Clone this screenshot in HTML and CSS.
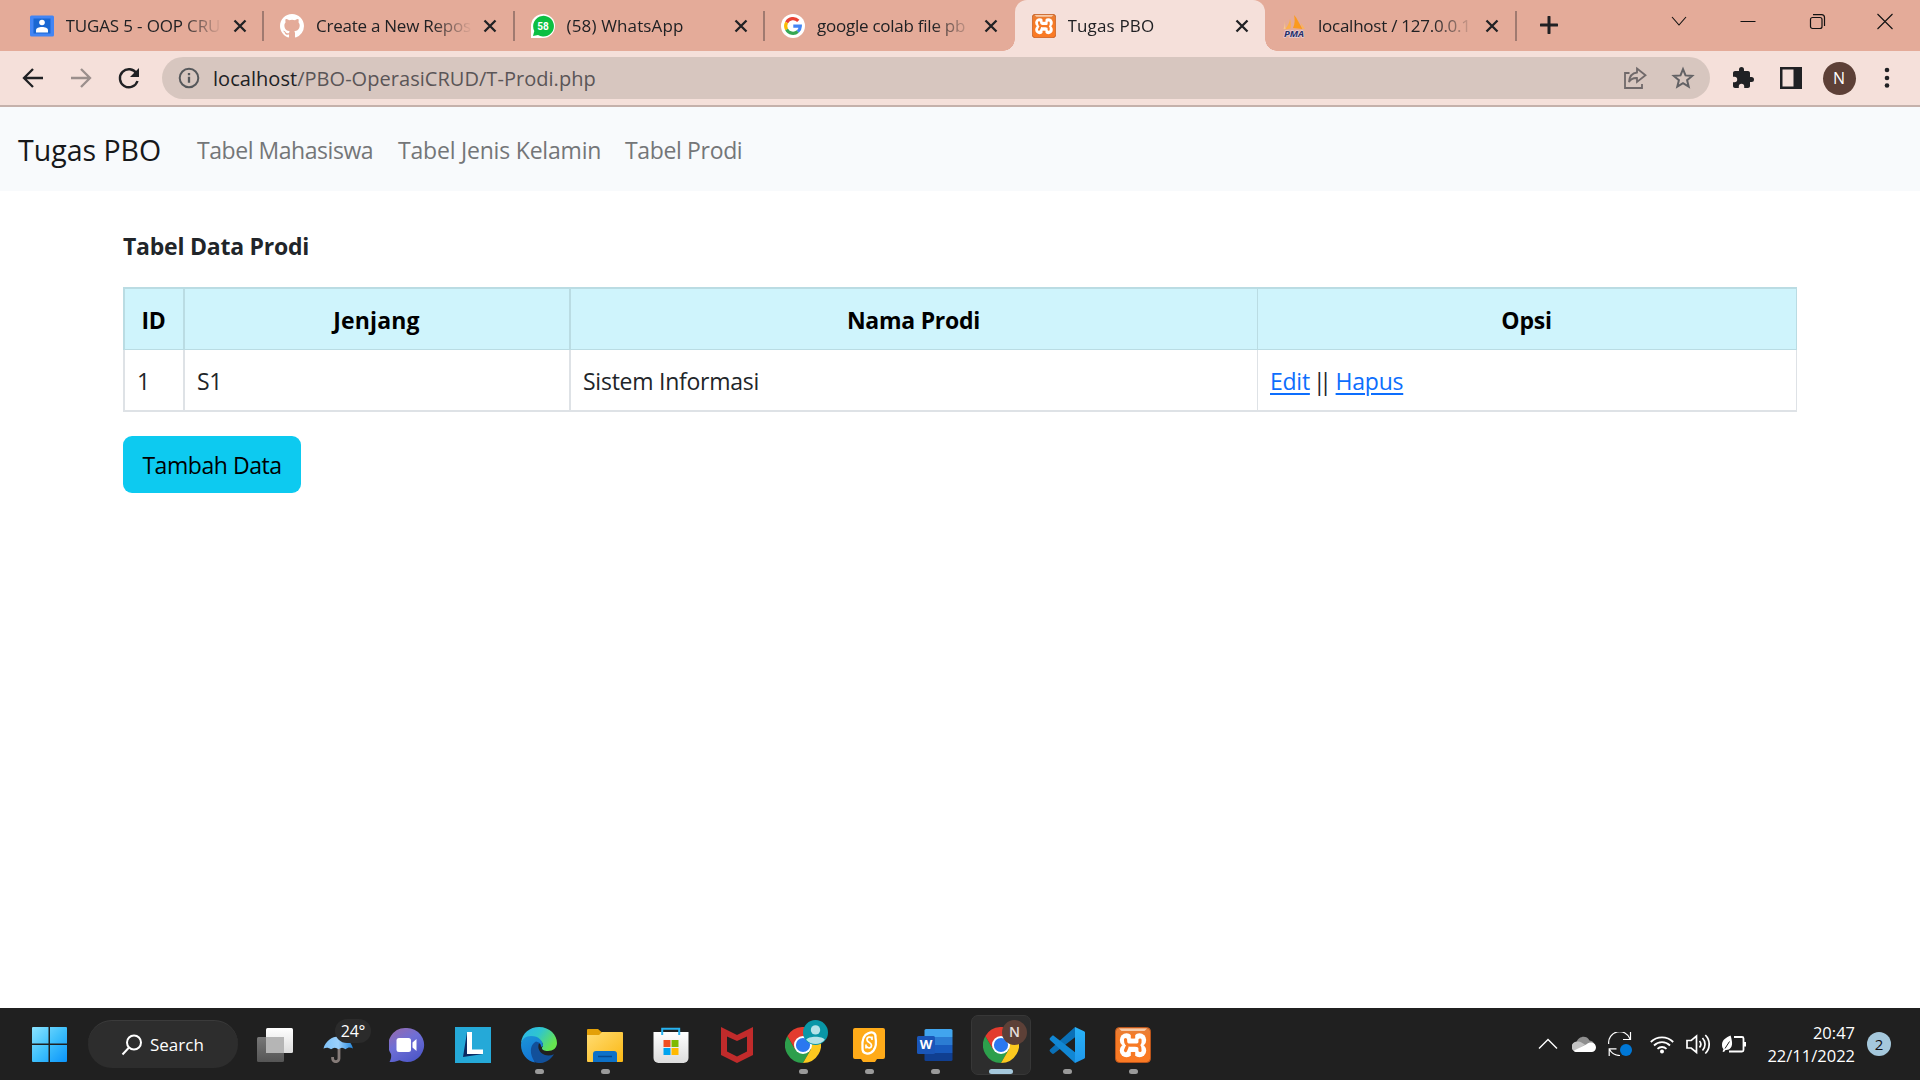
FILE: index.html
```html
<!DOCTYPE html>
<html lang="id">
<head>
<meta charset="utf-8">
<title>Tugas PBO</title>
<link rel="stylesheet" href="styles.css">
</head>
<body>
<svg class="defs" width="0" height="0" aria-hidden="true">
  <defs>
    <linearGradient id="win" x1="0" y1="0" x2="1" y2="1"><stop offset="0" stop-color="#8be3ff"/><stop offset=".5" stop-color="#3fc0fb"/><stop offset="1" stop-color="#0a94fb"/></linearGradient>
    <linearGradient id="orange" x1="0" y1="0" x2="0" y2="1"><stop offset="0" stop-color="#e5803c"/><stop offset=".3" stop-color="#f47a25"/><stop offset="1" stop-color="#fb7a24"/></linearGradient>
    <linearGradient id="paneBack" x1="0" y1="0" x2="0" y2="1"><stop offset="0" stop-color="#fff"/><stop offset="1" stop-color="#dcdcdc"/></linearGradient>
    <linearGradient id="paneFront" x1="0" y1="0" x2="0" y2="1"><stop offset="0" stop-color="#777"/><stop offset="1" stop-color="#555"/></linearGradient>
    <linearGradient id="umb" x1="0" y1="0" x2="1" y2="0"><stop offset="0" stop-color="#7fc2f8"/><stop offset=".5" stop-color="#9bd0fb"/><stop offset="1" stop-color="#2487dc"/></linearGradient>
    <linearGradient id="chat" x1="0" y1="0" x2=".6" y2="1"><stop offset="0" stop-color="#9a69a8"/><stop offset=".5" stop-color="#6f6fd6"/><stop offset="1" stop-color="#5059c9"/></linearGradient>
    <linearGradient id="edgeTop" x1="0" y1="0" x2="1" y2=".5"><stop offset="0" stop-color="#2bb3ee"/><stop offset=".5" stop-color="#2fc5cf"/><stop offset="1" stop-color="#66e44f"/></linearGradient>
    <linearGradient id="edgeLeft" x1="0" y1="0" x2=".4" y2="1"><stop offset="0" stop-color="#1b95d8"/><stop offset="1" stop-color="#1474d4"/></linearGradient>
    <linearGradient id="folder" x1="0" y1="0" x2="1" y2="1"><stop offset="0" stop-color="#ffdc73"/><stop offset="1" stop-color="#fbb813"/></linearGradient>
    <linearGradient id="bag" x1="0" y1="0" x2="0" y2="1"><stop offset="0" stop-color="#fff"/><stop offset="1" stop-color="#dcdcdc"/></linearGradient>
    <linearGradient id="code" x1="0" y1="0" x2="0" y2="1"><stop offset="0" stop-color="#29b2f7"/><stop offset="1" stop-color="#1f98ec"/></linearGradient>
    <symbol id="xampp" viewBox="0 0 36 36">
      <rect x=".5" y=".5" width="35" height="35" rx="4" fill="url(#orange)" stroke="#b9541b"/>
      <path d="M4 1.500h28l-2.500 2.500h-23z" fill="#f7cba9"/>
      <g fill="#fff"><circle cx="11.500" cy="13" r="6.700"/><circle cx="24.500" cy="13" r="6.700"/><circle cx="11.500" cy="23.500" r="6.700"/><circle cx="24.500" cy="23.500" r="6.700"/><path d="M10 12.500h16V24H10z"/></g>
      <path d="M15.800 7h4.400v4.500h-4.400zM15.800 25h4.400v5h-4.400z" fill="#f77a25"/>
      <path d="M10.500 12.500c0 4 1 5.700 4.500 5.700h5c4 0 5.500-1.200 5-5.200M10.500 23.500l1.500-3.500M20 18.200c4 0 5.500 1.300 5 5.300" fill="none" stroke="#f77a25" stroke-width="3.200" stroke-linecap="round"/>
    </symbol>
    <symbol id="chrome" viewBox="0 0 36 36">
      <path d="M2.400 9A18 18 0 0 0 18 36l7.800-13.500L18 18 10.200 22.500z" fill="#2d9f4c"/>
      <path d="M33.600 9A18 18 0 0 1 18 36l7.800-13.500L25.800 9z" fill="#fcc91f"/>
      <path d="M18 9h15.600a18 18 0 0 0-31.200 0l7.800 13.500z" fill="#e33b2e"/>
      <circle cx="18" cy="18" r="9" fill="#fff"/><circle cx="18" cy="18" r="7.100" fill="#2b78f0"/>
    </symbol>
    <symbol id="x" viewBox="0 0 14 14"><path d="M1.500 1.500l11 11M12.500 1.500l-11 11" stroke="#202124" stroke-width="2.300" fill="none"/></symbol>
  </defs>
</svg>

<header class="tabstrip">
  <div class="tab">
    <svg class="favicon" viewBox="0 0 24 24"><rect y="1.500" width="24" height="21" rx="1.500" fill="#4285f4"/><rect x="3.500" y="4.500" width="17" height="15" fill="#1967d2"/><circle cx="12" cy="8.500" r="2.800" fill="#fff"/><path d="M6 18.500v-2.300c0-2 3-3.200 6-3.200s6 1.200 6 3.200v2.300z" fill="#fff"/></svg>
    <span class="title caps">TUGAS 5 - OOP CRUD</span><svg class="close"><use href="#x"/></svg>
  </div>
  <div class="tab">
    <svg class="favicon" viewBox="0 0 16 16"><path fill="#fff" d="M8 0C3.580 0 0 3.580 0 8c0 3.540 2.290 6.530 5.470 7.590.4.070.55-.17.55-.38 0-.19-.01-.82-.01-1.490-2.010.37-2.530-.49-2.690-.94-.09-.23-.48-.94-.82-1.130-.28-.15-.68-.52-.01-.53.630-.01 1.080.58 1.230.82.720 1.210 1.870.87 2.330.66.070-.52.280-.87.510-1.070-1.780-.2-3.640-.89-3.640-3.950 0-.87.310-1.590.82-2.150-.08-.2-.36-1.020.08-2.120 0 0 .67-.21 2.200.82a7.600 7.600 0 0 1 4 0c1.530-1.040 2.200-.82 2.200-.82.44 1.100.16 1.920.08 2.120.51.560.82 1.270.82 2.150 0 3.070-1.870 3.750-3.650 3.950.29.250.54.730.54 1.480 0 1.070-.01 1.930-.01 2.200 0 .21.150.46.550.38A8 8 0 0 0 16 8c0-4.420-3.580-8-8-8z"/></svg>
    <span class="title">Create a New Repos</span><svg class="close"><use href="#x"/></svg>
  </div>
  <div class="tab">
    <svg class="favicon" viewBox="0 0 24 24"><path d="M0 24V12A12 12 0 1 1 12 24z" fill="#fff"/><path d="M2 22l1.300-5A10.400 10.400 0 1 1 7 21z" fill="#0cbf42"/><text x="12" y="16" text-anchor="middle" class="wa">58</text></svg>
    <span class="title wide">(58) WhatsApp</span><svg class="close"><use href="#x"/></svg>
  </div>
  <div class="tab beside">
    <svg class="favicon" viewBox="0 0 24 24"><circle cx="12" cy="12" r="12" fill="#fff"/><g fill="none" stroke-width="3.200"><path d="M17.300 6.800A7.300 7.300 0 0 0 5.600 8.500" stroke="#ea4335"/><path d="M5.600 8.500a7.300 7.300 0 0 0 0 7" stroke="#fbbc05"/><path d="M5.600 15.500a7.300 7.300 0 0 0 11.200 2" stroke="#34a853"/><path d="M12.300 12.200h7a7.300 7.300 0 0 1-2.500 5.300" stroke="#4285f4"/></g></svg>
    <span class="title">google colab file pb</span><svg class="close"><use href="#x"/></svg>
  </div>
  <div class="tab active">
    <svg class="favicon"><use href="#xampp"/></svg>
    <span class="title wide">Tugas PBO</span><svg class="close"><use href="#x"/></svg>
  </div>
  <div class="tab">
    <svg class="favicon" viewBox="0 0 24 24"><path d="M12 1c3 3 5 8 8.500 14L11 14c2-4 2-9 1-13z" fill="#fb9a1e"/><path d="M8 5c1 3 1 6 .5 9.500L3 15.500C5.500 12 7.500 9 8 5z" fill="#fbb04a"/><path d="M2.500 4c.5 4 .5 7-1 11h2z" fill="#fcc98a"/><path d="M19 9l4 6-3-.500z" fill="#fcb35a"/><text x="12" y="23" text-anchor="middle" class="pma">PMA</text></svg>
    <span class="title">localhost / 127.0.0.1</span><svg class="close"><use href="#x"/></svg>
  </div>
  <svg class="newtab" viewBox="0 0 18 18"><path d="M9 1v16M1 9h16" stroke="#202124" stroke-width="3" stroke-linecap="round"/></svg>
  <div class="window-buttons">
    <svg viewBox="0 0 18 18"><path d="M2 5l7 8 7-8" fill="none" stroke="#111" stroke-width="1.100"/></svg>
    <svg viewBox="0 0 18 18"><path d="M1.500 9.500h15" stroke="#111"/></svg>
    <svg viewBox="0 0 18 18"><rect x="2.500" y="5.500" width="11.500" height="11" rx="2" fill="none" stroke="#111" stroke-width="1.200"/><path d="M5 2.600h8.500a3 3 0 0 1 3 3V14" fill="none" stroke="#111" stroke-width="1.200"/></svg>
    <svg viewBox="0 0 18 18"><path d="M1.500 2l15 15M16.500 2l-15 15" stroke="#111" stroke-width="1.100"/></svg>
  </div>
</header>

<div class="toolbar">
  <svg viewBox="0 0 24 24"><path d="M22 12H4M12 3l-9 9 9 9" fill="none" stroke="#202124" stroke-width="2.300"/></svg>
  <svg viewBox="0 0 24 24"><path d="M2 12h18M12 3l9 9-9 9" fill="none" stroke="#9b8f8c" stroke-width="2.300"/></svg>
  <svg viewBox="0 0 24 24"><path d="M19.600 7.500A9 9 0 1 0 20.500 15" fill="none" stroke="#202124" stroke-width="2.400"/><path d="M22 2v9h-9z" fill="#202124"/></svg>
  <div class="omnibox">
    <svg viewBox="0 0 24 24"><circle cx="12" cy="12" r="9.300" fill="none" stroke="#56585b" stroke-width="2"/><path d="M12 7v2.300M12 10.800v6" stroke="#56585b" stroke-width="2.300"/></svg>
    <span class="url"><b>localhost</b>/PBO-OperasiCRUD/T-Prodi.php</span>
    <svg class="share" viewBox="0 0 24 24"><path d="M6.500 7H2v15h17v-4" fill="none" stroke="#70696a" stroke-width="1.800"/><path d="M14 2.500l8.500 6.700L14 16v-4c-4-.2-6.500 1-8 4 .5-6 3.500-9 8-9.500z" fill="none" stroke="#70696a" stroke-width="1.800"/></svg>
    <svg viewBox="0 0 24 24"><path d="M12 3.200l2.500 6.200 6.700.5-5.100 4.300 1.600 6.500-5.700-3.500-5.700 3.500 1.600-6.500-5.100-4.300 6.700-.5z" fill="none" stroke="#636265" stroke-width="2"/></svg>
  </div>
  <svg class="puzzle" viewBox="0 0 24 24"><path d="M20.500 11H19V7c0-1.100-.9-2-2-2h-4V3.500a2.500 2.500 0 0 0-5 0V5H4c-1.100 0-2 .9-2 2v3.800h1.500a2.700 2.700 0 0 1 0 5.400H2V20c0 1.100.9 2 2 2h3.800v-1.500a2.700 2.700 0 0 1 5.400 0V22H17c1.100 0 2-.9 2-2v-4h1.500a2.500 2.500 0 0 0 0-5z" fill="#202124"/></svg>
  <svg viewBox="0 0 24 24"><path d="M1 1h22v22H1zM3.500 3.500v17h11v-17z" fill="#202124" fill-rule="evenodd"/></svg>
  <span class="avatar">N</span>
  <svg viewBox="0 0 24 24" fill="#202124"><circle cx="12" cy="4" r="2.300"/><circle cx="12" cy="12" r="2.300"/><circle cx="12" cy="19.500" r="2.300"/></svg>
</div>

<main class="page">
  <nav class="navbar">
    <a class="brand">Tugas PBO</a>
    <a class="nav-a">Tabel Mahasiswa</a>
    <a class="nav-b">Tabel Jenis Kelamin</a>
    <a class="nav-c">Tabel Prodi</a>
  </nav>
  <div class="container">
    <h1>Tabel Data Prodi</h1>
    <table>
      <colgroup><col class="c1"><col class="c2"><col class="c3"><col class="c4"></colgroup>
      <thead><tr><th>ID</th><th class="jenjang">Jenjang</th><th>Nama Prodi</th><th>Opsi</th></tr></thead>
      <tbody><tr><td>1</td><td>S1</td><td>Sistem Informasi</td><td><a class="link">Edit</a> <span class="pipes">||</span> <a class="link">Hapus</a></td></tr></tbody>
    </table>
    <button class="btn">Tambah Data</button>
  </div>
</main>

<footer class="taskbar">
  <svg class="start" viewBox="0 0 35 35"><path d="M1 0h15.500v16.500H0V1a1 1 0 0 1 1-1zM18 0h16a1 1 0 0 1 1 1v15.500H18zM0 18h16.500v17H1a1 1 0 0 1-1-1zM18 18h17v16a1 1 0 0 1-1 1H18z" fill="url(#win)"/></svg>
  <div class="search"><svg viewBox="0 0 22 22"><circle cx="13" cy="8.500" r="7" fill="none" stroke="#fff" stroke-width="2"/><path d="M8 13.500l-6.500 7" stroke="#fff" stroke-width="2"/></svg><span>Search</span></div>
  <div class="apps">
    <div class="app"><svg viewBox="0 0 36 36"><rect x="9" y="1" width="27" height="25" rx="1.500" fill="url(#paneBack)"/><rect y="10" width="27" height="25" rx="1.500" fill="url(#paneFront)"/><path d="M9 10h18v16H9z" fill="#b5b5b5"/></svg></div>
    <div class="app weather"><svg viewBox="0 0 36 36"><path d="M16 18v13.500a3.200 3.200 0 0 1-6.400 0V30" fill="none" stroke="#857b78" stroke-width="2.800"/><path d="M.5 21.500C2.500 14 9 9.500 15.500 9.500S28 14 30 21.500c-3-1.500-5-1.200-7.500.8-2.500-2-4.500-2-7 0-2.500-2-4.800-2-7.500 0-2.500-1.800-4.500-2-7.500-.8z" fill="url(#umb)"/></svg><span class="temp">24°</span></div>
    <div class="app"><svg viewBox="0 0 36 36"><path d="M18 1a17 17 0 1 1-7.500 32.200C7.500 34.500 4 35 .5 35c1.500-2.500 2-5.500 1.500-8A17 17 0 0 1 18 1z" fill="url(#chat)"/><rect x="7.500" y="11" width="14.500" height="14" rx="2.500" fill="#fff"/><path d="M23.500 15.500l4-3.500v12l-4-3.500z" fill="#fff"/></svg></div>
    <div class="app"><svg viewBox="0 0 36 36"><path d="M0 0h36v36H0z" fill="#25a9d8"/><path d="M12 5.500L8 30l20-3-15-3z" fill="#0c2a63"/><path d="M12 5h5v17.500h11V27H12z" fill="#fff"/></svg></div>
    <div class="app run"><svg viewBox="0 0 36 36"><path d="M0 16C1 6 9 0 18 0c11 0 18 8 18 16 0 5-4 8-9 8-4 0-6.500-1.500-6-3.500 2-2 1-6-3-7C11 10 4 11 0 16z" fill="url(#edgeTop)"/><path d="M0 18C0 12 5 9 10 9c8 0 12 5 12 10l-2 1c0-2.500-1-4-3-4-3 2-7 8-3 19.500C6 34 0 27 0 18z" fill="url(#edgeLeft)"/><path d="M15 14.500c-5 2.500-8 11-1 20.800 8 2.500 15-1.500 19-8-7 3-14 0-15.500-6-.5-3 .5-5 1-5.500z" fill="#12509a"/></svg></div>
    <div class="app run"><svg viewBox="0 0 36 36"><path d="M0 3a1 1 0 0 1 1-1h10l4 3.500V8H0z" fill="#e3a008"/><path d="M0 8h12l3-3h20a1 1 0 0 1 1 1v28a1 1 0 0 1-1 1H1a1 1 0 0 1-1-1z" fill="url(#folder)"/><path d="M6 35v-8a3 3 0 0 1 3-3h18a3 3 0 0 1 3 3v8z" fill="#0d71c8"/><path d="M11 29.500h14" stroke="#07498e" stroke-width="1.500"/></svg></div>
    <div class="app"><svg viewBox="0 0 36 36"><path d="M.5 5h35v26a5 5 0 0 1-5 5h-25a5 5 0 0 1-5-5z" fill="url(#bag)"/><path d="M9.200 8V1.800h17V8" fill="none" stroke="#27b2f0" stroke-width="2"/><path d="M10.500 13h7v7h-7z" fill="#f25022"/><path d="M18.500 13h7v7h-7z" fill="#7fba00"/><path d="M10.500 21h7v7h-7z" fill="#00a4ef"/><path d="M18.500 21h7v7h-7z" fill="#ffb900"/></svg></div>
    <div class="app"><svg viewBox="0 0 36 36"><path d="M2 0l16 8 16-8v28l-16 8-16-8zM8 9.500v15l10 5 10-5v-15L18 14z" fill="#c12b2b" fill-rule="evenodd"/></svg></div>
    <div class="app run"><svg><use href="#chrome"/></svg><svg class="badge" viewBox="0 0 24 24"><circle cx="12" cy="12" r="12" fill="#0997a7"/><circle cx="12" cy="9.500" r="4.500" fill="#b4e3e8"/><path d="M3 19c2-4 16-4 18 0a12 12 0 0 1-18 0z" fill="#b4e3e8"/></svg></div>
    <div class="app run"><svg viewBox="0 0 36 36"><path d="M4 1h28a2 2 0 0 1 2 2v27a2 2 0 0 1-2 2h-6l-2 3H12l-2-3H4a2 2 0 0 1-2-2V3a2 2 0 0 1 2-2z" fill="#ffab19"/><path d="M17.500 6.200c4-2.200 7.500 0 7 4.300 1 5 .5 9.500-2 13-4 5-11.500 3.500-11-2.500C11 15 12 8 17.500 6.200z" fill="none" stroke="#fff" stroke-width="2.300"/><path d="M21 9.500v3.500M21 11.500c-1.500-2.500-5.500-1.500-5 1.500.500 2.800 4.500 2.300 4.500 5.300 0 3.200-3.500 3.500-5 1M15 17.500v4" fill="none" stroke="#fff" stroke-width="1.700"/></svg></div>
    <div class="app run"><svg viewBox="0 0 36 36"><path d="M9 2h25a1.500 1.500 0 0 1 1.500 1.500V10h-28V3.500A1.500 1.500 0 0 1 9 2z" fill="#41a5ee"/><path d="M7.500 10h28v8h-28z" fill="#2b7cd3"/><path d="M7.500 18h28v8h-28z" fill="#185abd"/><path d="M7.500 26h28v6.500A1.500 1.500 0 0 1 34 34H9a1.500 1.500 0 0 1-1.500-1.500z" fill="#103f91"/><rect y="9" width="18" height="18" rx="1.500" fill="#1a56b8"/><text x="9" y="22.300" text-anchor="middle" class="word">W</text></svg></div>
    <div class="app run current"><svg><use href="#chrome"/></svg><span class="badge">N</span></div>
    <div class="app run"><svg viewBox="0 0 36 36"><path d="M26 0L1 22.500a1.500 1.500 0 0 0 0 2l2 2c.7.600 1.500.500 2 0L27 9.500z" fill="#0a70b7"/><path d="M26 36L1 13a1.500 1.500 0 0 1 0-2l2-2c.7-.6 1.500-.5 2 0l22 17z" fill="#1187d4"/><path d="M26 0l9 4.200a1.500 1.500 0 0 1 1 1.300v25a1.500 1.500 0 0 1-1 1.300L26 36z" fill="url(#code)"/></svg></div>
    <div class="app run"><svg><use href="#xampp"/></svg></div>
  </div>
  <div class="tray">
    <svg viewBox="0 0 24 24"><path d="M3 16.500l9-9 9 9" fill="none" stroke="#fff" stroke-width="1.400"/></svg>
    <svg viewBox="0 0 24 24"><path d="M5 20a5 5 0 0 1-.5-10C6 5 14 2 17.500 8.500A6 6 0 0 1 19 20z" fill="#8f8f8f"/><path d="M5 20a5.200 5.200 0 0 1 0-10.500c3-.5 5 1 8 3L3 19z" fill="#c4c4c4"/><path d="M2 18.500L15 12c3-3 9-1.500 9 3.500a4.500 4.500 0 0 1-4.500 4.500H5c-1.500 0-2.500-.5-3-1.500z" fill="#fff"/></svg>
    <svg class="sync" viewBox="0 0 24 24"><path d="M.7 12A11 11 0 0 1 22 7M22.500 0v7.500H15M8.500 16.800H1.200V24M1.500 17.500C4 22 8 23.500 12 23.500" fill="none" stroke="#fff" stroke-width="1.200"/><circle cx="18" cy="18" r="6" fill="#0078d7"/></svg>
    <svg viewBox="0 0 24 24"><g fill="none" stroke="#fff" stroke-width="1.800"><path d="M.8 10a16 16 0 0 1 22.400 0M4 13.500a11.300 11.300 0 0 1 16 0M7.500 16.800a6.500 6.500 0 0 1 9 0"/></g><circle cx="12" cy="19.500" r="2" fill="#fff"/></svg>
    <svg viewBox="0 0 24 24"><g fill="none" stroke="#fff" stroke-width="1.700"><path d="M1 8.500h4.200L10.500 4v16.500L5.200 16H1zM13.500 9a5 5 0 0 1 0 6.500M16.500 6a9 9 0 0 1 0 12.500M19.300 3a13 13 0 0 1 0 18.500"/></g></svg>
    <svg viewBox="0 0 24 24"><path d="M12 5h8a1.500 1.500 0 0 1 1.500 1.500V18a1.500 1.500 0 0 1-1.500 1.500H7" fill="none" stroke="#fff" stroke-width="1.800"/><path d="M21.500 10H24v4.500h-2.500zM8.500 3.500C4.500 5.500 0 7.500 0 13c0 2 .5 3 1.500 4.200L.5 19.500 2 20l1.500-2c4.500.3 7-3 6.500-8-.3-2.500-.8-5-1.500-6.500z" fill="#fff"/><path d="M7.500 9.500L3 16.500" stroke="#202020" stroke-width="1"/></svg>
  </div>
  <div class="clock"><span>20:47</span><span>22/11/2022</span></div>
  <span class="count">2</span>
</footer>
</body>
</html>
```
FILE: styles.css
```css
* { box-sizing: border-box; }
body {
  margin: 0;
  width: 1920px;
  height: 1080px;
  display: flex;
  flex-direction: column;
  overflow: hidden;
  background: #fff;
  color: #212529;
  font-family: "Open Sans", "Noto Sans", sans-serif;
}
svg { display: block; flex: none; }
.defs { position: absolute; }
a { color: inherit; text-decoration: none; }

/* Browser tabs */
.tabstrip {
  height: 51px;
  flex: none;
  display: flex;
  align-items: flex-start;
  padding-left: 12.500px;
  background: #e4ab99;
}
.tab {
  position: relative;
  width: 250.500px;
  height: 51px;
  flex: none;
  display: flex;
  align-items: center;
  padding: 0 0 0 17px;
}
.tab::after {
  content: "";
  position: absolute;
  right: -1px;
  top: 11px;
  width: 2px;
  height: 30px;
  background: #a07a70;
}
.tab.beside::after { display: none; }
.tab.active { background: #f5e0da; border-radius: 12px 12px 0 0; }
.tab.active::before,
.tab.active::after {
  content: "";
  position: absolute;
  top: auto;
  bottom: 0;
  width: 12px;
  height: 12px;
  background: radial-gradient(circle at 0 0, transparent 11.500px, #f5e0da 12px);
}
.tab.active::before { left: -12px; }
.tab.active::after { right: -12px; background: radial-gradient(circle at 100% 0, transparent 11.500px, #f5e0da 12px); }
.favicon { width: 24px; height: 24px; }
.title {
  width: 155px;
  margin: 0 12px;
  overflow: hidden;
  white-space: nowrap;
  font-size: 17px;
  line-height: 30px;
  letter-spacing: -0.250px;
  color: #202124;
  -webkit-mask-image: linear-gradient(90deg, #000 115px, transparent 156px);
  mask-image: linear-gradient(90deg, #000 115px, transparent 156px);
}
.title.caps { letter-spacing: -0.150px; }
.title.wide { letter-spacing: 0.150px; }
.close { width: 14px; height: 14px; }
.newtab { width: 18px; height: 18px; margin: 16px 0 0 24.500px; }
.window-buttons { display: flex; gap: 50.800px; margin: 12px 0 0 112px; }
.window-buttons svg { width: 18px; height: 18px; }
.wa { font: bold 10px "Roboto", sans-serif; fill: #fff; }
.pma { font: italic bold 9.500px "Open Sans", sans-serif; fill: #2b2f66; stroke: #e8ddea; stroke-width: 1px; paint-order: stroke; }

/* Address bar */
.toolbar {
  height: 56px;
  flex: none;
  display: flex;
  align-items: center;
  padding: 0 21px;
  gap: 24px;
  background: #f5e0da;
  border-bottom: 2px solid #c5b1ab;
}
.toolbar svg { width: 24px; height: 24px; }
.omnibox {
  width: 1548px;
  height: 42px;
  margin: 0 -3px 0 -3px;
  display: flex;
  align-items: center;
  gap: 24px;
  padding: 0 15px;
  border-radius: 21px;
  background: #d7c6bf;
}
.url { flex: 1; margin-left: -12px; font-size: 20px; letter-spacing: 0.040px; color: #5a5557; }
.url b { font-weight: 400; color: #202124; }
.avatar {
  width: 33px;
  height: 33px;
  margin: 0 -4.500px;
  border-radius: 50%;
  background: #5d4037;
  color: #fff;
  font-size: 16px;
  line-height: 33px;
  text-align: center;
}

/* Page content */
.page { flex: 1; }
.navbar {
  height: 84px;
  display: flex;
  align-items: center;
  padding: 2px 0 0 18px;
  background: #f8fafc;
  white-space: nowrap;
  font-size: 23px;
  letter-spacing: -0.350px;
  color: #747678;
}
.brand { width: 179px; font-size: 28.500px; letter-spacing: 0; color: #17181a; }
.nav-a { width: 201px; letter-spacing: -0.450px; }
.nav-b { width: 227px; letter-spacing: -0.200px; }
.container { width: 1674px; margin: 0 auto; padding-top: 37px; font-size: 23px; }
h1 { margin: 0; height: 59px; font-size: 23px; line-height: 36px; font-weight: 700; letter-spacing: -0.230px; }
table { width: 1674px; table-layout: fixed; border-collapse: separate; border-spacing: 0; }
.c1 { width: 60px; }
.c2 { width: 386px; }
.c3 { width: 688px; }
.c4 { width: 540px; }
th, td { padding: 2px 12px 0; line-height: 36px; border: 0 solid #dee2e6; border-left-width: 2px; white-space: nowrap; letter-spacing: -0.250px; }
th { height: 63px; padding-left: 11px; border-color: #badce3; border-top-width: 2px; border-bottom-width: 1px; background: #cff4fc; color: #000; font-weight: 700; }
th.jenjang { letter-spacing: 0.150px; }
td { height: 62px; border-bottom-width: 2px; }
th:last-child, td:last-child { border-left-width: 1px; border-right-width: 1px; }
.pipes { letter-spacing: -6.500px; margin: 0 4.500px 0 -2.500px; }
.link { color: #0d6efd; text-decoration: underline; text-decoration-thickness: 2px; text-underline-offset: 3px; }
.btn {
  width: 178px;
  height: 57px;
  margin-top: 24px;
  padding: 0;
  border: 0;
  border-radius: 9px;
  background: #0dcaf0;
  color: #000;
  font-family: inherit;
  font-size: 23px;
  letter-spacing: -0.450px;
  white-space: nowrap;
}

/* Windows taskbar */
.taskbar {
  height: 72px;
  flex: none;
  display: flex;
  align-items: center;
  padding-left: 32px;
  background: #202020;
  color: #fff;
}
.start { width: 35px; height: 35px; }
.search {
  width: 150px;
  height: 48px;
  margin: 0 4px 0 21px;
  display: flex;
  align-items: center;
  gap: 7px;
  padding-left: 33px;
  border-radius: 24px;
  border-top: 1px solid #3b3b3b;
  background: #2d2d2d;
  font-size: 17px;
}
.search svg { width: 22px; height: 22px; }
.apps { display: flex; height: 72px; }
.app { position: relative; width: 66px; height: 72px; padding: 19px 15px 0; }
.app > svg { width: 36px; height: 36px; }
.app.run::after {
  content: "";
  position: absolute;
  left: 28.500px;
  top: 61px;
  width: 9px;
  height: 5px;
  border-radius: 2.500px;
  background: #9a9a9a;
}
.app.current { background: #2d2d2d; border: 1px solid #373737; border-radius: 7px; width: 60px; height: 60px; margin: 7px 3px 0; padding: 11px 11px 0; }
.app.current::after { left: 17px; top: 53px; width: 24px; background: #a5c8dc; }
.app .badge { position: absolute; left: 33px; top: 12px; width: 25px; height: 25px; }
span.badge { border-radius: 50%; background: #5d4037; color: #e6dfdc; font-size: 14px; font-weight: 600; line-height: 24px; text-align: center; }
.app.current .badge { left: 30px; top: 4px; }
.weather .temp {
  position: absolute;
  left: 27px;
  top: 11px;
  width: 36px;
  height: 24px;
  border-radius: 12px;
  background: #2b2b2b;
  font-size: 16px;
  line-height: 24px;
  text-align: center;
  letter-spacing: -0.200px;
}
.word { font: bold 13px "Open Sans", sans-serif; fill: #fff; }
.tray { display: flex; gap: 12px; margin-left: 370px; }
.tray svg { width: 24px; height: 24px; }
.tray .sync { margin-right: 6px; }
.clock { width: 109px; display: flex; flex-direction: column; align-items: flex-end; font-size: 16.500px; line-height: 23px; margin-top: -1px; }
.count { width: 24px; height: 24px; margin-left: 12px; border-radius: 50%; background: #a5c8dc; color: #111; font-size: 15px; line-height: 24px; text-align: center; }
```
